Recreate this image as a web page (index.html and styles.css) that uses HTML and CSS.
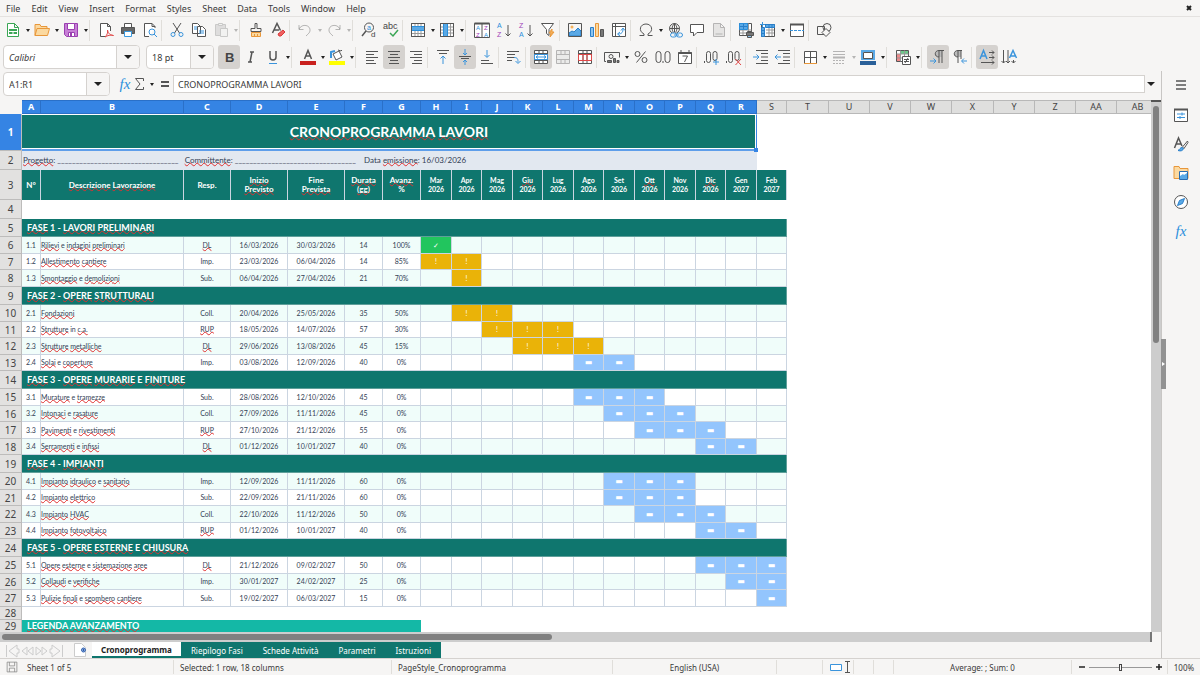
FILE: index.html
```html
<!DOCTYPE html>
<html lang="it">
<head>
    <meta charset="UTF-8">
    <meta name="viewport" content="width=device-width, initial-scale=1.0">
    <title>Cronoprogramma Lavori</title>
    <link rel="stylesheet" href="styles.css">
</head>
<body>
    <nav class="menubar">
        <button>File</button>
        <button>Edit</button>
        <button>View</button>
        <button>Insert</button>
        <button>Format</button>
        <button>Styles</button>
        <button>Sheet</button>
        <button>Data</button>
        <button>Tools</button>
        <button>Window</button>
        <button>Help</button>
        <button class="close" aria-label="Close"><svg viewBox="0 0 10 10"><path class="thick" d="M3 3l4 4M7 3l-4 4"/></svg></button>
    </nav>

    <!-- Standard toolbar -->
    <div class="toolbar">
        <button class="tool" title="New"><svg viewBox="0 0 16 16"><path class="green" fill="#fff" d="M2.500 1.500h7l4 4v9h-11zM9.500 1.500v4h4"/><path fill="#3aa655" stroke="none" d="M4 7h8v5H4z"/><path stroke="#fff" d="M4 9.500h8M8 10v2"/></svg></button>
        <button class="drop" aria-label="New options"></button>
        <button class="tool" title="Open"><svg viewBox="0 0 16 16"><path fill="#fbd9a0" stroke="#e8973a" d="M1 13.500V2.500h5l1 2h6v2M1 13.500l2-7h12.500l-2 7z"/></svg></button>
        <button class="drop" aria-label="Open options"></button>
        <button class="tool" title="Save"><svg viewBox="0 0 16 16"><path fill="#c77fd6" stroke="#9a3fb0" d="M1.500 1.500h13v13h-11l-2-2z"/><path fill="#fff" stroke="#9a3fb0" d="M4.500 1.500h7v6h-7zM5.500 10.500h6v4h-6z"/><path fill="#9a3fb0" stroke="none" d="M7 11h2v3H7z"/></svg></button>
        <button class="drop" aria-label="Save options"></button>
        <span class="sep"></span>
        <button class="tool" title="Export as PDF"><svg viewBox="0 0 16 16"><path fill="#fff" d="M8 14.500H2.500v-13h7l3 3V9M9.500 1.500v3h3"/><path class="red" d="M7 15c2-2 3-4 2.500-7 1 4 2.500 5 6 5.500-3-1-6 0-8.500 1.500"/></svg></button>
        <button class="tool" title="Print"><svg viewBox="0 0 16 16"><path fill="#fff" d="M4.500 1.500h7v4h-7z"/><path fill="#666" d="M1.500 5.500h13v6h-13z"/><path stroke="#3a9ae0" fill="#fff" d="M4.500 9.500h7v5h-7z"/></svg></button>
        <button class="tool" title="Print Preview"><svg viewBox="0 0 16 16"><path fill="#fff" d="M13 6V4.500l-3-3H2.500v13H7M10 1.500v3h3"/><circle class="blue" cx="10" cy="10" r="3"/><path class="blue" d="M12 12l3 3"/></svg></button>
        <span class="sep"></span>
        <button class="tool" title="Cut"><svg viewBox="0 0 16 16"><path d="M4 1l6.500 10M12 1L5.500 11"/><circle class="blue" cx="4" cy="12.500" r="2"/><circle class="blue" cx="12" cy="12.500" r="2"/></svg></button>
        <button class="tool" title="Copy"><svg viewBox="0 0 16 16"><path fill="#fff" d="M1.500 1.500h5l3 3v7h-8zM6.500 4.500h5l3 3v7h-8z"/><path class="blue" d="M3 5h3M3 7h3M8 9h5M8 11h5"/></svg></button>
        <button class="tool" title="Paste" disabled><svg viewBox="0 0 16 16"><path fill="#bbb" stroke="#888" d="M2.500 2.500h10v11h-10z"/><path fill="#eee" stroke="#888" d="M5.500 1.500h4v2h-4zM7.500 6.500h7v8h-7z"/></svg></button>
        <button class="drop" aria-label="Paste options" disabled></button>
        <span class="sep"></span>
        <button class="tool" title="Clone Formatting"><svg viewBox="0 0 16 16"><path d="M7 1.500h2v5h4v3H3v-3h4z"/><path fill="#fbd9a0" stroke="#e8973a" d="M3.500 10.500h9v4h-9zM6.500 12v2M9.500 12v2"/></svg></button>
        <button class="tool" title="Clear Formatting"><svg viewBox="0 0 16 16"><path class="mid" d="M2.500 11L7 1.500l3.500 7M4 8h5"/><path fill="#f06060" stroke="#d83a3a" d="M8 12l5-4 2 2-4 4H9z"/></svg></button>
        <span class="sep"></span>
        <button class="tool" title="Undo" disabled><svg viewBox="0 0 16 16"><path d="M2 3v4.500h4.500M2 7c3-6 12-4 11 2-.5 2-2 3-4 5"/></svg></button>
        <button class="drop" aria-label="Undo list" disabled></button>
        <button class="tool" title="Redo" disabled><svg viewBox="0 0 16 16"><path d="M14 3v4.500H9.500M14 7c-3-6-12-4-11 2 .5 2 2 3 4 5"/></svg></button>
        <button class="drop" aria-label="Redo list" disabled></button>
        <span class="sep"></span>
        <button class="tool" title="Find and Replace"><svg viewBox="0 0 16 16"><circle cx="8" cy="5.500" r="4.500"/><path class="mid" d="M5 9l-4 5"/><text class="blue-text" x="6" y="8" font-size="7">a</text><text x="10" y="15" font-size="8">d</text></svg></button>
        <button class="tool" title="Spelling"><svg viewBox="0 0 16 16"><text x="0" y="7" font-size="9">abc</text><path class="green mid" d="M7 11l3 3 5-6"/></svg></button>
        <span class="sep"></span>
        <button class="tool" title="Row"><svg viewBox="0 0 16 16"><path fill="#fff" d="M1.500 1.500h13v13h-13z"/><path class="soft" d="M1.500 11.500h13M5 1.500v13M8 1.500v13M11 1.500v13"/><path fill="#5aa9e6" stroke="#2a8fdc" d="M1.500 4.500h13v4h-13z"/><path d="M1.500 1.500h13v13h-13z"/></svg></button>
        <button class="drop" aria-label="Row options"></button>
        <button class="tool" title="Column"><svg viewBox="0 0 16 16"><path fill="#fff" d="M1.500 1.500h13v13h-13z"/><path class="soft" d="M1.500 5h13M1.500 8h13M1.500 11h13M11.500 1.500v13"/><path fill="#5aa9e6" stroke="#2a8fdc" d="M4.500 1.500h4v13h-4z"/><path d="M1.500 1.500h13v13h-13z"/></svg></button>
        <button class="drop" aria-label="Column options"></button>
        <span class="sep"></span>
        <button class="tool" title="Sort"><svg viewBox="0 0 16 16"><path fill="#fff" d="M.5 1.500h15v14H.5zM8 2v13"/><path class="thick" d="M.5 1.500h15"/><text class="blue-text" x="2" y="8" font-size="6">A</text><text class="purple-text" x="2" y="15" font-size="6">Z</text><text class="purple-text" x="10" y="8" font-size="6">Z</text><text class="blue-text" x="10" y="15" font-size="6">A</text></svg></button>
        <button class="tool" title="Sort Ascending"><svg viewBox="0 0 16 16"><text class="blue-text" x="1" y="6" font-size="7">A</text><text class="purple-text" x="1" y="15" font-size="7">Z</text><path d="M12 3v11M9.500 11.500L12 14l2.500-2.500"/></svg></button>
        <button class="tool" title="Sort Descending"><svg viewBox="0 0 16 16"><text class="purple-text" x="1" y="6" font-size="7">Z</text><text class="blue-text" x="1" y="15" font-size="7">A</text><path d="M12 3v11M9.500 11.500L12 14l2.500-2.500"/></svg></button>
        <button class="tool" title="AutoFilter"><svg viewBox="0 0 16 16"><path fill="#fff" d="M1.500 1.500h12L9 7.500v6l-2.500-2v-4z"/><path fill="#f6b25a" stroke="#e8973a" d="M12 7l-3 4h2l-1 4 4-5h-2z"/></svg></button>
        <span class="sep"></span>
        <button class="tool" title="Image"><svg viewBox="0 0 16 16"><circle fill="#f6b25a" stroke="none" cx="5" cy="5" r="1.500"/><path fill="#5aa9e6" stroke="#2a7fc9" d="M2 14v-3l3-2 2 1 4-4 3 3v5z"/><path d="M1.500 1.500h13v13h-13z"/></svg></button>
        <button class="tool" title="Chart"><svg viewBox="0 0 16 16"><path fill="#8cc4ef" stroke="#2a7fc9" d="M1.500 5.500h3v9h-3z"/><path fill="#fbd9a0" stroke="#e8973a" d="M6.500 1.500h3v13h-3z"/><path fill="#777" d="M11.500 7.500h3v7h-3z"/></svg></button>
        <button class="tool" title="Pivot Table"><svg viewBox="0 0 16 16"><path fill="#fff" d="M1.500 1.500h13v13h-13zM1.500 4.500h13M4.500 1.500v13"/><path class="blue" d="M7 12c4 0 5-2 5-5M10 8.500L12 6l2 2.500M9 10l-2.500 2L9 14"/></svg></button>
        <span class="sep"></span>
        <button class="tool" title="Special Character"><svg viewBox="0 0 16 16"><path d="M1.500 13.500H6V12C0 9 2 2 8 2s8 7 2 10v1.500h4.500"/></svg></button>
        <button class="drop" aria-label="Recent characters"></button>
        <button class="tool" title="Hyperlink"><svg viewBox="0 0 16 16"><circle cx="7.500" cy="6.500" r="5"/><path d="M2.500 6.500h10M7.500 1.500v9M7.500 1.500c-3 3-3 6-1 9M7.500 1.500c3 3 3 6 1 9"/><rect class="blue" fill="#f6f5f4" x="3.500" y="11" width="6" height="4" rx="2"/><rect class="blue" fill="#f6f5f4" x="9.500" y="11" width="6" height="4" rx="2"/><path class="blue" d="M7 13h5"/></svg></button>
        <button class="tool" title="Comment"><svg viewBox="0 0 16 16"><path fill="#fff" d="M1.500 2.500h13v8H8L4.500 14v-3.500h-3z"/></svg></button>
        <button class="tool" title="Headers and Footers" disabled><svg viewBox="0 0 16 16"><path fill="#ccc" d="M2.500 1.500h7l4 4v9h-11zM9.500 1.500v4h4M4.500 12h7"/></svg></button>
        <span class="sep"></span>
        <button class="tool" title="Define Print Area"><svg viewBox="0 0 16 16"><path fill="#fff" d="M1.500 1.500h12v12h-12z"/><path class="soft" d="M1.500 8h12M1.500 11h8M5 8v5M10.500 1.500v12"/><path fill="#5aa9e6" stroke="#2a8fdc" d="M1.500 1.500h8v6h-8z"/><path stroke="#2a7fc9" d="M2 4.500h7M5.500 2v5"/><path fill="#8cc4ef" d="M9.500 9.500h4v6h-4z"/><path fill="#777" d="M8.500 10.500h7v3h-7z"/></svg></button>
        <button class="tool" title="Freeze"><svg viewBox="0 0 16 16"><path fill="#fff" d="M1.500 2.500h13v12h-13z"/><path class="soft" d="M6 8h8M6 11h8M9 6v8M12 6v8"/><path fill="#5aa9e6" stroke="#2a7fc9" d="M1.500 5.500h3v9h-3zM5.500 2.500h9v3h-9zM1.500 8.500h3M1.500 11.500h3M9 2.500v3M12 2.500v3"/><path class="blue" d="M0 2.500h5M2.500 0v5"/></svg></button>
        <button class="drop" aria-label="Freeze options"></button>
        <button class="tool" title="Split Window"><svg viewBox="0 0 16 16"><path fill="#fff" d="M1.500 2.500h13v12h-13z"/><path class="thick" d="M1 2.500h14"/><path class="blue" stroke-dasharray="3 1" d="M1 8.500h14"/></svg></button>
        <span class="sep"></span>
        <button class="tool" title="Show Draw Functions"><svg viewBox="0 0 16 16"><path d="M1.500 4.500h7v8h-7z"/><circle cx="11" cy="5.500" r="4"/><path fill="#f6f5f4" d="M10 6.500l4 4-4 4-4-4z"/></svg></button>
    </div>

    <!-- Formatting toolbar -->
    <div class="toolbar">
        <div class="combo font-name">
            <input type="text" value="Calibri" aria-label="Font name">
            <button aria-label="Font list"></button>
        </div>
        <div class="combo font-size">
            <input type="text" value="18 pt" aria-label="Font size">
            <button aria-label="Size list"></button>
        </div>
        <button class="tool on" title="Bold"><svg viewBox="0 0 16 16"><text class="heavy" x="4" y="13" font-size="13">B</text></svg></button>
        <button class="tool" title="Italic"><svg viewBox="0 0 16 16"><path class="mid" d="M7 3h4M5 13h4M9 3L7 13"/></svg></button>
        <button class="tool" title="Underline"><svg viewBox="0 0 16 16"><path class="mid" d="M5 2v6c0 4 6 4 6 0V2"/><path class="blue" d="M4 14.500h8"/></svg></button>
        <button class="drop" aria-label="Underline options"></button>
        <span class="sep"></span>
        <button class="tool" title="Font Color"><svg viewBox="0 0 16 16"><path class="mid" d="M4.500 10L8 1.500l3.500 8.500M6 7h4"/><path fill="#c9211e" stroke="none" d="M0 12h16v4H0z"/></svg></button>
        <button class="drop" aria-label="Font color options"></button>
        <button class="tool" title="Highlighting"><svg viewBox="0 0 16 16"><path fill="#fff" d="M4 5l6-3 3 6-6 3zM9 1l3 1 1-1"/><path class="blue thick" d="M2 9V3l4-1"/><path fill="#ff0" stroke="none" d="M0 12h16v4H0z"/></svg></button>
        <button class="drop" aria-label="Highlighting options"></button>
        <span class="sep"></span>
        <button class="tool" title="Align Left"><svg viewBox="0 0 16 16"><path d="M2 2.500h12M2 5.500h8M2 8.500h12M2 11.500h8M2 14.500h10"/></svg></button>
        <button class="tool on" title="Align Center"><svg viewBox="0 0 16 16"><path d="M2 2.500h12M4 5.500h8M2 8.500h12M4 11.500h8M3 14.500h10"/></svg></button>
        <button class="tool" title="Align Right"><svg viewBox="0 0 16 16"><path d="M2 2.500h12M6 5.500h8M2 8.500h12M6 11.500h8M4 14.500h10"/></svg></button>
        <span class="sep"></span>
        <button class="tool" title="Align Top"><svg viewBox="0 0 16 16"><path d="M2 1.500h12M4 4.500h8"/><path class="blue" d="M8 15V7M5.500 9.500L8 7l2.500 2.500"/></svg></button>
        <button class="tool on" title="Center Vertically"><svg viewBox="0 0 16 16"><path d="M2 7.500h12M4 9.500h8"/><path class="blue" d="M8 0v5.500M6 4l2 2 2-2M8 16v-5M6 13l2-2 2 2"/></svg></button>
        <button class="tool" title="Align Bottom"><svg viewBox="0 0 16 16"><path d="M2 14.500h12M2 11.500h8"/><path class="blue" d="M8 1v7M5.500 6L8 8.500 10.500 6"/></svg></button>
        <span class="sep"></span>
        <button class="tool" title="Wrap Text"><svg viewBox="0 0 16 16"><path d="M1 2.500h12M1 5.500h8M1 8.500h8M1 11.500h5"/><path class="blue" d="M8 8.500c4 0 4 2 4 5M9.500 12l2.500 2.500L14.500 12"/></svg></button>
        <span class="sep"></span>
        <button class="tool on" title="Merge and Center Cells"><svg viewBox="0 0 16 16"><path fill="#fff" d="M1.500 1.500h13v13h-13zM6 1.500v13M10 1.500v13M1.500 4.500h13M1.500 11.500h13"/><path class="blue" fill="#fff" d="M1.500 5.500h13v5h-13zM3 8h10M5 6.500L3 8l2 1.500M11 6.500L13 8l-2 1.500"/></svg></button>
        <button class="tool" title="Merge Cells" disabled><svg viewBox="0 0 16 16"><path fill="#ddd" d="M1.500 1.500h13v13h-13zM6 1.500v4M10 1.500v4M1.500 5.500h13M1.500 10.500h13M6 10.500v4M10 10.500v4"/></svg></button>
        <button class="tool" title="Unmerge Cells"><svg viewBox="0 0 16 16"><path fill="#fff" d="M1.500 1.500h13v13h-13zM6 1.500v13M10 1.500v13M1.500 4.500h13"/><path class="red" d="M1.500 5.500h13v6h-13zM6 5.500v6M10 5.500v6"/></svg></button>
        <span class="sep"></span>
        <button class="tool" title="Format as Currency"><svg viewBox="0 0 16 16"><path d="M2 12.500H.5v-9h15v5"/><circle cx="7" cy="7.500" r="2"/><path fill="#777" d="M3.500 11.500h4v2h-4zM9.500 9.500h2v4h-2zM13 11.500h2v2h-2z"/></svg></button>
        <button class="drop" aria-label="Currency options"></button>
        <button class="tool" title="Format as Percent"><svg viewBox="0 0 16 16"><path d="M12.500 2.500l-9 11"/><circle cx="4.500" cy="5" r="2.500"/><circle cx="11.500" cy="11" r="2.500"/></svg></button>
        <button class="tool" title="Format as Number"><svg viewBox="0 0 16 16"><rect x="1" y="2.500" width="5" height="11" rx="2.500"/><rect x="10" y="2.500" width="5" height="11" rx="2.500"/><path d="M8 12v2"/></svg></button>
        <button class="tool" title="Format as Date"><svg viewBox="0 0 16 16"><path fill="#fff" d="M1.500 3.500h13v11h-13zM4 1v2M12 1v2"/><path class="thick" d="M1.500 4h13"/><path d="M5.500 7h5l-3 6"/></svg></button>
        <span class="sep"></span>
        <button class="tool" title="Add Decimal Place"><svg viewBox="0 0 16 16"><path d="M.5 12v2"/><rect x="2.500" y="2.500" width="4" height="11" rx="2"/><rect x="9" y="2.500" width="4" height="9" rx="2"/><path class="blue" d="M9 13h6M12 10v6"/></svg></button>
        <button class="tool" title="Delete Decimal Place"><svg viewBox="0 0 16 16"><path d="M.5 12v2"/><rect x="2.500" y="2.500" width="4" height="11" rx="2"/><rect x="9" y="2.500" width="4" height="9" rx="2"/><path class="red" d="M9.500 10l5.500 6M15 10l-5.500 6"/></svg></button>
        <span class="sep"></span>
        <button class="tool" title="Increase Indent"><svg viewBox="0 0 16 16"><path d="M3 1.500h12M8 4.500h7M8 8h7M8 11.500h7M3 14.500h12"/><path class="blue" d="M0 8h6M3.500 5.500L6 8l-2.500 2.500"/></svg></button>
        <button class="tool" title="Decrease Indent"><svg viewBox="0 0 16 16"><path d="M3 1.500h12M8 4.500h7M8 8h7M8 11.500h7M3 14.500h12"/><path class="blue" d="M6 8H0M2.500 5.500L0 8l2.500 2.500"/></svg></button>
        <span class="sep"></span>
        <button class="tool" title="Borders"><svg viewBox="0 0 16 16"><path fill="#fff" d="M2.500 2.500h12v12h-12zM8.500 2.500v12M2.500 8.500h12"/><path stroke="#e8973a" d="M2 14.500h13"/></svg></button>
        <button class="drop" aria-label="Border options"></button>
        <button class="tool" title="Border Style" disabled><svg viewBox="0 0 16 16"><path d="M2 2.500h12M2 5.500h12"/><path stroke-width="2" d="M2 8.500h12"/><path stroke-dasharray="2 1" d="M2 11.500h12M2 14.500h12"/></svg></button>
        <button class="drop" aria-label="Border style options" disabled></button>
        <button class="tool" title="Border Color"><svg viewBox="0 0 16 16"><path fill="#fff" stroke="#5aa9e6" stroke-width="2" d="M2 2h12v8H2z"/><path d="M3.500 3.500h9v6h-9z"/><path fill="#2a6099" stroke="none" d="M0 12h16v4H0z"/></svg></button>
        <button class="drop" aria-label="Border color options"></button>
        <span class="sep"></span>
        <button class="tool" title="Conditional Formatting"><svg viewBox="0 0 16 16"><path fill="#fff" d="M1.500 1.500h12v11h-12z"/><path fill="#6cc98a" stroke="none" d="M5 2h8v3H5z"/><path fill="#f08a8a" stroke="none" d="M2 5h4v7H2z"/><path class="soft" d="M1.500 5h12M1.500 9h12M5.500 1.500v11M9.500 1.500v6"/><path fill="#fff" d="M7.500 7.500h8v8h-8z"/><path d="M9 10.500h5M9 12.500h5M13 9l-3 5"/></svg></button>
        <button class="drop" aria-label="Conditional options"></button>
        <span class="sep"></span>
        <button class="tool on" title="Left-To-Right"><svg viewBox="0 0 16 16"><path fill="#bbb" stroke="none" d="M9 8C4 8 4 1.500 9 1.500h3V8z"/><path d="M9 8C4 8 4 1.500 9 1.500h5M9 1.500V14M12 1.500V14"/><path class="blue" d="M0 12h6M3.500 9.500L6 12l-2.500 2.500"/></svg></button>
        <button class="tool" title="Right-To-Left"><svg viewBox="0 0 16 16"><path fill="#bbb" stroke="none" d="M6 8C1 8 1 1.500 6 1.500h3V8z"/><path d="M6 8C1 8 1 1.500 6 1.500h4M6 1.500V14M9 1.500V10"/><path class="blue" d="M15 12h-5M12 9.500L9.500 12l2.500 2.500"/></svg></button>
        <span class="sep"></span>
        <button class="tool on" title="Text direction from left to right"><svg viewBox="0 0 16 16"><path class="blue mid" d="M1 10L4.500 1.500 8 10M2 7h5"/><path d="M10 3.500h5M10 8.500h5M2 13.500h13M13 1.500l2 2-2 2M13 6.500l2 2-2 2M13 11.500l2 2-2 2"/></svg></button>
        <button class="tool" title="Text direction from top to bottom"><svg viewBox="0 0 16 16"><path class="blue mid" d="M8.500 9L12 1.500 15.500 9M10 7h4"/><path d="M2.500 1v13M7 1v13M12.500 11v3M.5 12l2 2 2-2M5 12l2 2 2-2M10.500 12l2 2 2-2"/></svg></button>
    </div>

    <div class="workspace">
        <main class="editor">
            <div class="formula-bar">
                <div class="combo name-box">
                    <input type="text" value="A1:R1" aria-label="Name Box">
                    <button aria-label="Named ranges"></button>
                </div>
                <button class="fx" title="Function Wizard">fx</button>
                <button class="sigma" title="Select Function"><svg viewBox="0 0 12 16"><path d="M9.500 5V2.500h-8L6 8l-4.500 5.500h8V11"/></svg></button>
                <button class="drop" aria-label="Functions"></button>
                <button class="equals" title="Formula"><svg viewBox="0 0 12 16"><path class="thick" d="M2 6h8M2 10h8"/></svg></button>
                <input class="formula" type="text" value="CRONOPROGRAMMA LAVORI" aria-label="Input line">
                <button class="expand" aria-label="Expand Formula Bar"></button>
            </div>

            <div class="sheet-area">
                <div class="sheet">
                    <table id="grid"></table>
                </div>
                <div class="vscroll"><div class="thumb"></div></div>
            </div>
            <div class="hscroll"><div class="thumb"></div></div>

            <div class="tabs">
                <div class="tab-nav">
                    <button aria-label="First sheet"><svg viewBox="0 0 14 14"><path d="M1.500 1v12M12 1L4 7l8 6V9h2V5h-2z"/></svg></button>
                    <button aria-label="Previous sheet"><svg viewBox="0 0 14 14"><path d="M7 3L2 7l5 4zM13 3L8 7l5 4z"/></svg></button>
                    <button aria-label="Next sheet"><svg viewBox="0 0 14 14"><path d="M1 3l5 4-5 4zM7 3l5 4-5 4z"/></svg></button>
                    <button aria-label="Last sheet"><svg viewBox="0 0 14 14"><path d="M12.500 1v12M2 1l8 6-8 6V9H0V5h2z"/></svg></button>
                </div>
                <button class="add-sheet" aria-label="Add sheet"><svg viewBox="0 0 16 16"><path fill="#fff" stroke="#ccc" d="M1.500 1.500h7l4 4v9h-11z"/><circle fill="#fff" stroke="#2a5db0" cx="10.500" cy="8" r="2"/><path stroke="#2a5db0" d="M10.500 6.500v3M9 8h3"/></svg></button>
                <button class="tab active">Cronoprogramma</button>
                <button class="tab">Riepilogo Fasi</button>
                <button class="tab">Schede Attività</button>
                <button class="tab">Parametri</button>
                <button class="tab">Istruzioni</button>
            </div>
        </main>

        <aside class="sidebar">
            <div class="handle"></div>
            <button title="Sidebar Settings"><svg viewBox="0 0 16 16"><path class="mid" d="M3 4h10M3 8h10M3 12h10"/></svg></button>
            <button title="Properties"><svg viewBox="0 0 16 16"><path fill="#fff" d="M1.500 2.500h13v12h-13z"/><path class="thick" d="M1 2.500h14"/><path class="blue" d="M4 7h8M4 10.500h8M9 5.500v3M7 9v3"/></svg></button>
            <button title="Styles"><svg viewBox="0 0 16 16"><path class="mid" d="M1.500 12L5.500 2l3.500 8M3 8h5"/><path fill="#fff" d="M14.500 5l-5 6 1.500 1.500 4-6z"/><path fill="#5aa9e6" stroke="#2a7fc9" d="M9 11.500c-2 0-2 2-4 3 3 1 5 0 5.500-2z"/></svg></button>
            <button title="Gallery"><svg viewBox="0 0 16 16"><path fill="#fbd9a0" stroke="#e8973a" d="M1 13.500v-12h5l1 2h8v10z"/><path fill="#fff" stroke="#2a6db0" d="M6.500 6.500h8v8h-8z"/><path fill="#5aa9e6" stroke="none" d="M7 14v-3l3-2 1 1 3-2v6z"/></svg></button>
            <button title="Navigator"><svg viewBox="0 0 16 16"><circle fill="#fff" cx="8" cy="8" r="6.500"/><path fill="#5aa9e6" stroke="#2a7fc9" d="M11.500 4.500l-2 5-5 2 2-5z"/></svg></button>
            <button class="fx" title="Functions">fx</button>
        </aside>
    </div>

    <footer class="statusbar">
        <div class="sheet-count"><svg viewBox="0 0 16 16"><path d="M1.500 1.500h13v13h-13zM4.500 1.500v5h7v-5M4.500 14.500v-5h7v5"/></svg>Sheet 1 of 5</div>
        <div>Selected: 1 row, 18 columns</div>
        <div>PageStyle_Cronoprogramma</div>
        <div class="center">English (USA)</div>
        <div></div>
        <div class="mode"><svg viewBox="0 0 22 14"><path class="blue" fill="#fff" d="M1.500 4.500h11v6h-11z"/><path d="M16 1.500h5M16 12.500h5M18.500 1.500v11"/></svg></div>
        <div></div>
        <div></div>
        <div class="center">Average: ; Sum: 0</div>
        <div class="zoom">
            <button aria-label="Zoom out"><svg viewBox="0 0 8 8"><path class="mid" d="M1 4h6"/></svg></button>
            <input type="range" min="20" max="180" value="100" aria-label="Zoom">
            <button aria-label="Zoom in"><svg viewBox="0 0 8 8"><path class="mid" d="M1 4h6M4 1v6"/></svg></button>
        </div>
        <div class="center">100%</div>
    </footer>

    <script src="script.js"></script>
</body>
</html>
```

FILE: styles.css
```css
:root {
    --chrome: #f6f5f4;
    --line: #d5d2cf;
    --ink: #3a3a3a;
    --teal: #0f766e;
    --select: #3584e4;
    --cell-line: #cbd5e1;
}
* {
    box-sizing: border-box;
}
body {
    margin: 0;
    height: 100vh;
    display: flex;
    flex-direction: column;
    overflow: hidden;
    background: var(--chrome);
    color: var(--ink);
    font-family: "Noto Sans", sans-serif;
    font-size: 9px;
}
button, input {
    font: inherit;
    color: inherit;
    margin: 0;
    padding: 0;
    border: none;
    background: none;
    min-width: 0;
}

/* icons */
svg {
    display: block;
    width: 16px;
    height: 16px;
    overflow: visible;
    fill: none;
    stroke: #555;
    stroke-width: 1;
}
svg text {
    fill: #444;
    stroke: none;
    font-family: "Liberation Sans", sans-serif;
}
svg .heavy { font-weight: bold; }
svg .blue-text { fill: #2a8fdc; }
svg .purple-text { fill: #a040b8; }
svg .blue { stroke: #3a94dc; }
svg .green { stroke: #3aa655; }
svg .red { stroke: #e04848; }
svg .soft { stroke: #999; }
svg .mid { stroke-width: 1.5; }
svg .thick { stroke-width: 2; }

/* menu bar */
.menubar {
    display: flex;
    flex: none;
    align-items: center;
    gap: 11px;
    height: 17px;
    padding: 0 6px;
    border-bottom: 1px solid #e4e2e0;
}
.close {
    margin-left: auto;
}
.close svg {
    width: 10px;
    height: 10px;
    stroke: #222;
}

/* toolbars */
.toolbar {
    display: flex;
    flex: none;
    align-items: center;
    height: 27px;
    padding: 0 2px 1px;
}
.tool {
    display: flex;
    align-items: center;
    justify-content: center;
    flex: none;
    width: 22px;
    height: 24px;
    border-radius: 3px;
}
.tool.on {
    background: #d5d2cf;
}
.tool:disabled svg {
    opacity: 0.4;
}
.drop {
    display: flex;
    align-items: center;
    justify-content: center;
    flex: none;
    width: 7px;
    height: 24px;
}
.drop::after, .combo button::after, .expand::after {
    content: "";
    border: 2px solid transparent;
    border-top: 3px solid #222;
    border-bottom: none;
}
.drop:disabled::after {
    opacity: 0.3;
}
.sep {
    flex: none;
    width: 5px;
    height: 21px;
    border-left: 1px solid #e0deda;
}
.drop + .sep {
    width: 6px;
}
.combo {
    display: flex;
    flex: none;
    height: 24px;
    background: #fff;
    border: 1px solid var(--line);
    border-radius: 4px;
    overflow: hidden;
}
.combo input {
    flex: 1;
    padding-left: 5px;
}
.combo button {
    display: flex;
    align-items: center;
    justify-content: center;
    width: 23px;
    background: var(--chrome);
    border-left: 1px solid var(--line);
}
.combo button::after, .expand::after {
    border-width: 4px 4px 0;
}
.font-name {
    width: 137px;
    margin: 0 6px 0 1px;
    font-style: italic;
}
.font-size {
    width: 68px;
    margin-right: 4px;
}

/* main area */
.workspace {
    display: flex;
    flex: 1;
    min-height: 0;
}
.editor {
    display: flex;
    flex-direction: column;
    flex: 1;
    min-width: 0;
}
.formula-bar {
    display: flex;
    flex: none;
    align-items: center;
    height: 29px;
    padding: 0 4px 3px 3px;
}
.name-box {
    width: 107px;
    margin-right: 8px;
}
.fx {
    width: 14px;
    color: #2a8fdc;
    font-family: "Liberation Serif", serif;
    font-style: italic;
    font-size: 15px;
    line-height: 16px;
}
.sigma {
    margin: 0 2px;
}
.sigma svg, .equals svg {
    width: 12px;
}
.equals {
    margin: 0 2px 0 4px;
}
.formula {
    flex: 1;
    height: 18px;
    padding: 0 4px;
    background: #fff;
    border: 1px solid var(--line);
}
.expand {
    display: flex;
    justify-content: center;
    width: 12px;
}
.sheet-area {
    display: flex;
    flex: 1;
    min-height: 0;
}
.sheet {
    flex: 1;
    min-width: 0;
    overflow: hidden;
    background: #fff;
}

/* spreadsheet grid */
#grid {
    table-layout: fixed;
    width: 0;
    border-collapse: separate;
    border-spacing: 0;
    color: #334155;
    font-family: Lato, sans-serif;
    font-size: 7px;
    line-height: 9px;
}
#grid .c-head { width: 22px; }
#grid .c-num { width: 19px; }
#grid .c-desc { width: 143px; }
#grid .c-resp { width: 47px; }
#grid .c-date { width: 57px; }
#grid .c-small { width: 38px; }
#grid .c-month { width: 31px; }
#grid .c-month:nth-child(even) { width: 30px; }
#grid .c-free { width: 41px; }
#grid .c-free:nth-child(4n+1) { width: 42px; }
#grid th, #grid td {
    padding: 0;
    overflow: hidden;
    white-space: nowrap;
    text-align: center;
}
#grid u {
    text-decoration: underline wavy #e03030 1px;
    text-decoration-skip-ink: none;
    text-underline-offset: -1px;
}
#grid thead th {
    height: 14px;
    background: #dfdfde;
    border: solid #b8b8b8;
    border-width: 1px 1px 1px 0;
    color: #444;
    font: 9px/12px "Noto Sans", sans-serif;
}
#grid thead th.picked {
    background: var(--select);
    border-color: #2a70c8;
    color: #fff;
    font-weight: bold;
}
#grid thead th:first-child {
    background: var(--chrome);
    border-color: var(--chrome);
}
#grid .row-head {
    background: #e2e1e0;
    border: solid #bdbcbb;
    border-width: 0 1px 1px 0;
    color: #444;
    font: 10px/12px "Noto Sans", sans-serif;
}
#grid .row-head.picked {
    background: var(--select);
    color: #fff;
    font-weight: bold;
}
#grid .title-row { height: 37px; }
#grid .info-row, #grid .blank-row { height: 19px; }
#grid .label-row { height: 30px; }
#grid .phase { height: 18px; }
#grid .task { height: 17px; }
#grid .task:nth-child(odd) { height: 16px; }
#grid .gap-row { height: 13px; }
#grid .legend-row { height: 17px; }
#grid .legend-row .row-head {
    vertical-align: top;
}

#grid .title {
    position: relative;
    overflow: visible;
    background: var(--teal);
    border: 1px solid #fff;
    border-width: 1px 1px 2px 0;
    border-bottom-color: #5e9eea;
    border-right-color: var(--select);
    color: #fff;
    font-size: 14px;
    font-weight: bold;
    line-height: 20px;
    box-shadow: inset -1px -1px #fff;
}
.fill-handle {
    position: absolute;
    right: -2px;
    bottom: -3px;
    width: 4px;
    height: 4px;
    background: var(--select);
}
#grid .info {
    padding-left: 1px;
    background: #e2e8f0;
    text-align: left;
    white-space: pre;
    font-size: 8px;
}
#grid .label {
    background: var(--teal);
    border-right: 1px solid var(--cell-line);
    color: #fff;
    font-size: 8px;
    font-weight: bold;
}
#grid .month {
    font-size: 7px;
}
#grid .phase-name {
    padding-left: 5px;
    background: var(--teal);
    border: solid #5f9f9a;
    border-width: 0 1px 1px 0;
    color: #fff;
    font-size: 9px;
    font-weight: bold;
    line-height: 12px;
    text-align: left;
}
#grid .task td {
    border: solid var(--cell-line);
    border-width: 0 1px 1px 0;
}
#grid .task .desc {
    text-align: left;
}
#grid .tint td { background: #f0fdfa; }
#grid .task .done { background: #22c55e; color: #fff; }
#grid .task .wip { background: #eab308; color: #fff; }
#grid .task .todo {
    background: #93c5fd;
    color: #fff;
    font: 8px/9px "DejaVu Sans", sans-serif;
}
#grid .legend-name {
    padding-left: 5px;
    background: #14b8a6;
    color: #fff;
    font-size: 9px;
    font-weight: bold;
    line-height: 12px;
    text-align: left;
    vertical-align: top;
}

/* scrollbars */
.vscroll {
    flex: none;
    width: 10px;
    padding: 4px 2px 0;
    background: #cdcdcd;
    border-top: 2px solid #555;
}
.vscroll .thumb {
    height: 45%;
    border-radius: 3px;
    background: #808080;
}
.hscroll {
    flex: none;
    height: 10px;
    margin-right: 9px;
    padding: 2px;
    background: #cdcdcd;
    border-right: 2px solid #777;
}
.hscroll .thumb {
    width: 48%;
    height: 6px;
    border-radius: 3px;
    background: #808080;
}

/* sheet tabs */
.tabs {
    display: flex;
    flex: none;
    height: 16px;
    font-size: 8px;
}
.tab-nav {
    display: flex;
    gap: 1px;
    padding: 1px 9px 0 5px;
}
.tab-nav svg {
    width: 14px;
    height: 14px;
    stroke: #ccc;
}
.add-sheet {
    margin-right: 3px;
}
.tab {
    padding: 0 10px;
    background: var(--teal);
    color: #fff;
}
.tab.active {
    padding: 0 9px;
    background: #fff;
    border-bottom: 2px solid var(--teal);
    color: #222;
    font-weight: bold;
}

/* sidebar */
.sidebar {
    position: relative;
    display: flex;
    flex-direction: column;
    flex: none;
    align-items: center;
    gap: 13px;
    width: 39px;
    padding-top: 6px;
    border-left: 1px solid #c8c6c4;
}
.sidebar button:nth-of-type(2) {
    margin-top: 1px;
}
.handle {
    position: absolute;
    left: -1px;
    top: 268px;
    width: 5px;
    height: 50px;
    background: #929292;
}
.handle::after {
    content: "";
    position: absolute;
    left: 1px;
    top: 23px;
    border: 2px solid transparent;
    border-left: 3px solid #fff;
    border-right: none;
}

/* status bar */
.statusbar {
    display: grid;
    grid-template-columns: 173fr 218fr 221fr 164fr 46fr 31px 20px 20px 178fr 96px 33px;
    flex: none;
    align-items: center;
    height: 17px;
    border-top: 1px solid var(--line);
    font-size: 8px;
}
.statusbar > div {
    display: flex;
    align-items: center;
    height: 14px;
    padding-left: 6px;
    white-space: nowrap;
}
.statusbar > div + div {
    border-left: 1px solid #e0deda;
}
.statusbar .center {
    justify-content: center;
    padding: 0;
}
.statusbar .sheet-count svg {
    width: 12px;
    height: 12px;
    margin-right: 9px;
    opacity: 0.7;
}
.statusbar .mode svg {
    width: 22px;
    height: 14px;
}
.zoom {
    gap: 3px;
    padding-right: 4px;
}
.zoom svg {
    width: 8px;
    height: 8px;
    stroke: #222;
}
.zoom input {
    flex: 1;
    height: 10px;
    appearance: none;
    background: linear-gradient(#999, #999) center / 100% 1px no-repeat;
}
.zoom input::-webkit-slider-thumb {
    appearance: none;
    width: 3px;
    height: 7px;
    background: var(--chrome);
    border: 1px solid #444;
}
```

FILE: script.js
```js
// words inside <u> are the ones flagged by the spell checker
const labels = ['N°', '<u>Descrizione</u> <u>Lavorazione</u>', 'Resp.', '<u>Inizio</u><br><u>Previsto</u>',
    'Fine<br><u>Prevista</u>', '<u>Durata</u><br><u>(gg)</u>', '<u>Avanz.</u><br>%'];
const months = ['Mar', 'Apr', 'Mag', '<u>Giu</u>', 'Lug', 'Ago', 'Set', '<u>Ott</u>', 'Nov', '<u>Dic</u>', 'Gen', 'Feb'];
const columns = [...'ABCDEFGHIJKLMNOPQRSTUVWXYZ', 'AA', 'AB'];

// task: description, resp, start, end, days, progress, first month, number of months
const phases = [
    { name: '<u>FASE</u> 1 - <u>LAVORI</u> <u>PRELIMINARI</u>', tasks: [
        ['<u>Rilievi</u> e <u>indagini</u> <u>preliminari</u>', '<u>DL</u>', '16/03/2026', '30/03/2026', 14, 100, 0, 1],
        ['<u>Allestimento</u> <u>cantiere</u>', 'Imp.', '23/03/2026', '06/04/2026', 14, 85, 0, 2],
        ['<u>Smontaggio</u> e <u>demolizioni</u>', 'Sub.', '06/04/2026', '27/04/2026', 21, 70, 1, 1]
    ] },
    { name: '<u>FASE</u> 2 - <u>OPERE</u> <u>STRUTTURALI</u>', tasks: [
        ['<u>Fondazioni</u>', 'Coll.', '20/04/2026', '25/05/2026', 35, 50, 1, 2],
        ['<u>Strutture</u> in <u>c.a.</u>', '<u>RUP</u>', '18/05/2026', '14/07/2026', 57, 30, 2, 3],
        ['<u>Strutture</u> <u>metalliche</u>', '<u>DL</u>', '29/06/2026', '13/08/2026', 45, 15, 3, 3],
        ['<u>Solai</u> e <u>coperture</u>', 'Imp.', '03/08/2026', '12/09/2026', 40, 0, 5, 2]
    ] },
    { name: '<u>FASE</u> 3 - <u>OPERE</u> <u>MURARIE</u> E <u>FINITURE</u>', tasks: [
        ['<u>Murature</u> e <u>tramezze</u>', 'Sub.', '28/08/2026', '12/10/2026', 45, 0, 5, 3],
        ['<u>Intonaci</u> e <u>rasature</u>', 'Coll.', '27/09/2026', '11/11/2026', 45, 0, 6, 3],
        ['<u>Pavimenti</u> e <u>rivestimenti</u>', '<u>RUP</u>', '27/10/2026', '21/12/2026', 55, 0, 7, 3],
        ['<u>Serramenti</u> e <u>infissi</u>', '<u>DL</u>', '01/12/2026', '10/01/2027', 40, 0, 9, 2]
    ] },
    { name: '<u>FASE</u> 4 - <u>IMPIANTI</u>', tasks: [
        ['<u>Impianto</u> <u>idraulico</u> e <u>sanitario</u>', 'Imp.', '12/09/2026', '11/11/2026', 60, 0, 6, 3],
        ['<u>Impianto</u> <u>elettrico</u>', 'Sub.', '22/09/2026', '21/11/2026', 60, 0, 6, 3],
        ['<u>Impianto</u> <u>HVAC</u>', 'Coll.', '22/10/2026', '11/12/2026', 50, 0, 7, 3],
        ['<u>Impianto</u> <u>fotovoltaico</u>', '<u>RUP</u>', '01/12/2026', '10/01/2027', 40, 0, 9, 2]
    ] },
    { name: '<u>FASE</u> 5 - <u>OPERE</u> <u>ESTERNE</u> E <u>CHIUSURA</u>', tasks: [
        ['<u>Opere</u> <u>esterne</u> e <u>sistemazione</u> <u>aree</u>', '<u>DL</u>', '21/12/2026', '09/02/2027', 50, 0, 9, 3],
        ['<u>Collaudi</u> e <u>verifiche</u>', 'Imp.', '30/01/2027', '24/02/2027', 25, 0, 10, 2],
        ['<u>Pulizie</u> <u>finali</u> e <u>sgombero</u> <u>cantiere</u>', 'Sub.', '19/02/2027', '06/03/2027', 15, 0, 11, 1]
    ] }
];

let rowNumber = 0;

function row(className, cells) {
    rowNumber++;
    const picked = rowNumber === 1 ? ' picked' : '';
    return `<tr class="${className}"><th class="row-head${picked}">${rowNumber}</th>${cells}</tr>`;
}

function taskRow(task, number) {
    const [desc, resp, start, end, days, progress, first, count] = task;
    const state = progress === 100 ? 'done' : progress > 0 ? 'wip' : 'todo';
    const mark = { done: '✓', wip: '!', todo: '▬' }[state];
    const bars = months.map((m, i) =>
        i >= first && i < first + count ? `<td class="${state}">${mark}</td>` : '<td></td>').join('');
    const tint = (rowNumber + 1) % 2 === 0 ? ' tint' : '';
    return row('task' + tint, `<td>${number}</td><td class="desc">${desc}</td><td>${resp}</td>` +
        `<td>${start}</td><td>${end}</td><td>${days}</td><td>${progress}%</td>${bars}`);
}

const line = '_'.repeat(33);
let html = '<colgroup><col class="c-head"><col class="c-num"><col class="c-desc"><col class="c-resp">' +
    '<col class="c-date"><col class="c-date"><col class="c-small"><col class="c-small">' +
    '<col class="c-month">'.repeat(12) + '<col class="c-free">'.repeat(9) + '</colgroup>';

html += '<thead><tr><th></th>' +
    columns.map((c, i) => `<th${i < 18 ? ' class="picked"' : ''}>${c}</th>`).join('') + '</tr></thead>';

html += '<tbody>';
html += row('title-row', '<td class="title" colspan="18"><u>CRONOPROGRAMMA</u> <u>LAVORI</u><span class="fill-handle"></span></td>');
html += row('info-row', `<td class="info" colspan="18"><u>Progetto</u>: ${line}   <u>Committente</u>: ${line}    Data <u>emissione</u>: 16/03/2026</td>`);
html += row('label-row', labels.map(l => `<td class="label">${l}</td>`).join('') +
    months.map((m, i) => `<td class="label month">${m}<br>${i < 10 ? 2026 : 2027}</td>`).join(''));
html += row('blank-row', '');
html += '</tbody>';

phases.forEach((phase, p) => {
    html += '<tbody>' + row('phase', `<td class="phase-name" colspan="19">${phase.name}</td>`);
    phase.tasks.forEach((task, t) => {
        html += taskRow(task, `${p + 1}.${t + 1}`);
    });
    html += '</tbody>';
});

html += '<tbody>' + row('gap-row', '') +
    row('legend-row', '<td class="legend-name" colspan="7"><u>LEGENDA</u> <u>AVANZAMENTO</u></td>') + '</tbody>';

document.getElementById('grid').innerHTML = html;
```
